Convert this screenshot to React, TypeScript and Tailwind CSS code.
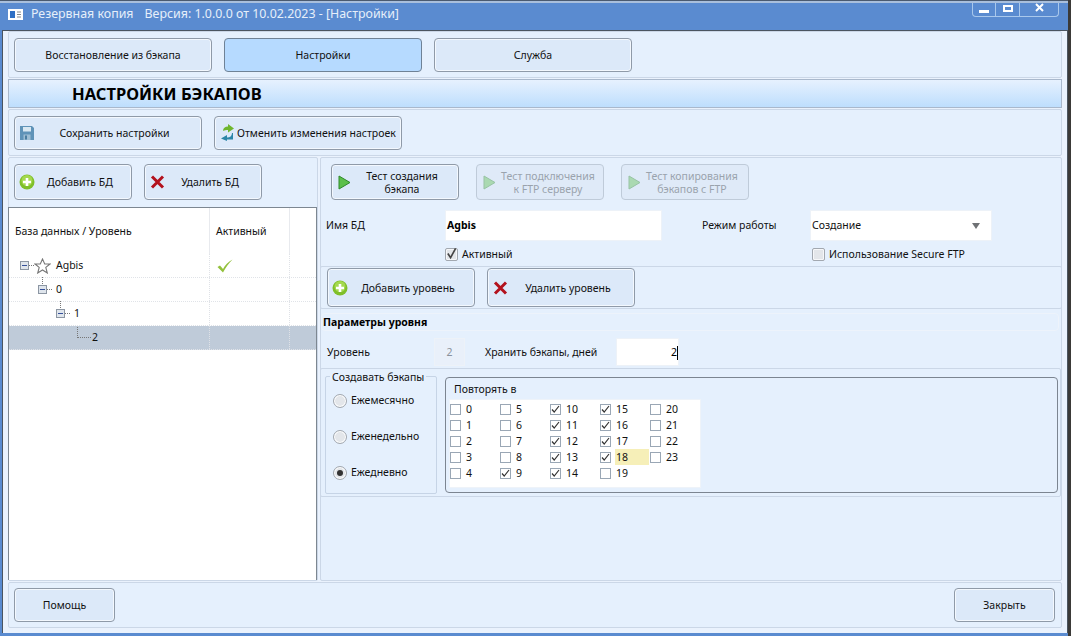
import React from "react";

const font = "font-['Noto_Sans','Open_Sans',sans-serif]";
const panel = "bg-[#e5f0fd] border border-[#cbd7e7] rounded-[2px]";

function PlusIcon() {
  return (
    <svg width="16" height="16" viewBox="0 0 16 16">
      <circle cx="8" cy="8" r="7.5" fill="#7fbf2a" />
      <circle cx="8" cy="6.5" r="5.5" fill="#a4d94f" />
      <path d="M8 4v8M4 8h8" stroke="#fff" strokeWidth="2.6" />
    </svg>
  );
}

function CrossIcon() {
  return (
    <svg width="15" height="14" viewBox="0 0 15 14">
      <path d="M2 1.5l11 11M13 1.5l-11 11" stroke="#b3121d" strokeWidth="3" />
    </svg>
  );
}

function PlayIcon({ faded }: { faded?: boolean }) {
  return (
    <svg width="13" height="15" viewBox="0 0 13 15" className={faded ? "opacity-40" : ""}>
      <path d="M1 1l11 6.5L1 14z" fill="#5cc04a" stroke="#2f8a2a" strokeWidth="1" />
    </svg>
  );
}

function SaveIcon() {
  return (
    <svg width="14" height="14" viewBox="0 0 14 14">
      <path d="M0 0h12l2 2v12H0z" fill="#5f93b8" />
      <rect x="3" y="1" width="8" height="4.5" fill="#d9e8f2" />
      <rect x="3.5" y="8.5" width="7" height="5.5" fill="#9dbdd3" />
      <rect x="5" y="9.5" width="2" height="4" fill="#4a7da0" />
    </svg>
  );
}

function RevertIcon() {
  return (
    <svg width="15" height="17" viewBox="0 0 15 17">
      <path d="M3 7c0-3 2-4.500 5-4.500V0l6 4.500-6 4V6C6 6 4.500 6 3 7z" fill="#6fb62e" />
      <path d="M12 9c0 3-2 4.500-5 4.500V11L1 14.500l6 2.500v-1.500h6V9z" fill="#2c86a8" />
    </svg>
  );
}

function StarIcon() {
  return (
    <svg width="17" height="16" viewBox="0 0 17 16">
      <path d="M8.500 1l2.200 5h5.300l-4.200 3.400 1.500 5.600-4.800-3-4.800 3 1.500-5.600L1 6h5.300z" fill="none" stroke="#777" strokeWidth="1.100" />
    </svg>
  );
}

function TickIcon() {
  return (
    <svg width="16" height="14" viewBox="0 0 16 14">
      <path d="M0.500 8l2.500-1.500 3 3.500C8 6 11 3 15.500 0.500 11.500 4.500 9 8 6 13.500z" fill="#93c13c" />
    </svg>
  );
}

function Expander({ stem }: { stem?: boolean }) {
  return (
    <span className="relative w-[9px] h-[9px] bg-[#dfe5ec] border border-[#8c96a3] flex items-center justify-center shrink-0">
      <span className="w-[5px] h-px bg-[#35509a]" />
      {stem && <span className="absolute -top-[9px] left-[3px] h-[7px] border-l border-dotted border-[#777]" />}
    </span>
  );
}

function Btn({ w, h = "h-[34px]", active, disabled, icon, iconBox = "w-[24px]", children }: {
  w: string;
  h?: string;
  active?: boolean;
  disabled?: boolean;
  icon?: React.ReactNode;
  iconBox?: string;
  children: React.ReactNode;
}) {
  const look = active
    ? "bg-[#b6daff] border-[#6f8296] text-[#111]"
    : disabled
      ? "bg-[#dfeaf8] border-[#bfcbd9] text-[#9aa3ad]"
      : "bg-[#dce9f9] border-[#8f9aa8] text-[#111] shadow-[inset_0_0_0_1px_#f3f8fe]";
  return (
    <div className={`${w} ${h} ${look} border rounded-[4px] flex items-center shrink-0 leading-[13px] whitespace-nowrap`}>
      {icon && <span className={`${iconBox} shrink-0 flex items-center justify-center`}>{icon}</span>}
      <span className="flex-1 text-center pt-px">{children}</span>
    </div>
  );
}

function Check({ on, big }: { on?: boolean; big?: boolean }) {
  if (big) {
    return (
      <span className="w-[13px] h-[13px] bg-[#e3e6ea] border border-[#a2a8b0] rounded-[2px] shadow-[inset_0_0_0_1px_#f6f7f9] shrink-0 flex items-center justify-center">
        {on && (
          <svg width="12" height="13" viewBox="0 0 12 13" className="-mt-[2px]">
            <path d="M2 6.500l3 4.500L10.500 1" fill="none" stroke="#444" strokeWidth="1.800" />
          </svg>
        )}
      </span>
    );
  }
  return (
    <span className="w-[11px] h-[11px] bg-white border border-[#9aa7b5] shrink-0 flex items-center justify-center">
      {on && (
        <svg width="9" height="9" viewBox="0 0 9 9">
          <path d="M1 4.500l2.200 2.500L8 1" fill="none" stroke="#333" strokeWidth="1.200" />
        </svg>
      )}
    </span>
  );
}

function Radio({ on, label }: { on?: boolean; label: string }) {
  return (
    <div className="flex items-center gap-[4px] h-[36px]">
      <span className="w-[14px] h-[14px] rounded-full bg-[#e3e6ea] border border-[#a2a8b0] shadow-[inset_0_0_0_1px_#fff] flex items-center justify-center">
        {on && <span className="w-[6px] h-[6px] rounded-full bg-[#333]" />}
      </span>
      <span>{label}</span>
    </div>
  );
}

const hours = [
  0, 1, 2, 3, 4, 5, 6, 7, 8, 9, 10, 11, 12, 13, 14, 15, 16, 17, 18, 19, 20, 21, 22, 23,
];
const checked = [9, 10, 11, 12, 13, 14, 15, 16, 17, 18];

function TreeRow({ indent, label, expander, stem, selected, link, tick, star }: {
  indent: string;
  label: string;
  expander?: boolean;
  stem?: boolean;
  selected?: boolean;
  link?: boolean;
  tick?: boolean;
  star?: boolean;
}) {
  return (
    <div className={`flex h-6 border-b border-dotted border-[#e0e3e8] ${selected ? "bg-[#bfcbd9]" : ""}`}>
      <div className={`w-[201px] flex items-center ${indent} border-r border-dotted border-[#dfe2e7]`}>
        {expander && <Expander stem={stem} />}
        {link && <span className="w-[14px] h-[11px] -mt-[11px] border-l border-b border-dotted border-[#777] mr-[1px]" />}
        {expander && <span className="w-[5px] border-t border-dotted border-[#777] mr-[4px]" />}
        {star && <span className="mr-[5px] -ml-[4px] flex"><StarIcon /></span>}
        <span>{label}</span>
      </div>
      <div className="w-[80px] border-r border-dotted border-[#dfe2e7] flex items-center pl-[7px]">
        {tick && <TickIcon />}
      </div>
    </div>
  );
}

export default function App() {
  return (
    <div className={`w-[1071px] h-[636px] bg-[#3b3a38] overflow-hidden flex text-[10.5px] text-[#111] ${font}`}>
      <div className="w-[1068px] h-[636px] bg-[#5a8bd0] flex flex-col shrink-0">
        <div className="h-px bg-[#4a5a70] shrink-0" />
        <div className="h-[2px] bg-[#a9bfdc] shrink-0" />

        {/* Title bar */}
        <div className="h-[27px] shrink-0 flex justify-between pl-[8px]">
          <div className="flex items-center gap-[8px] pb-[4px] text-[12.400px] text-[#e6effa]">
            <svg width="15" height="11" viewBox="0 0 15 11">
              <rect width="15" height="11" fill="#fff" />
              <rect x="2" y="2" width="5" height="7" fill="#2f6fc4" />
              <path d="M9 3h4M9 5.500h4M9 8h4" stroke="#888" />
            </svg>
            <span>Резервная копия</span>
            <span className="ml-[3px]">Версия: 1.0.0.0 от 10.02.2023 - [Настройки]</span>
          </div>
          <div className="flex h-[14px] w-[87px] border border-t-0 border-[#a9c8ec] rounded-b-[4px] mr-[9px]">
            <div className="w-[23px] border-r border-[#a9c8ec] flex items-end justify-center pb-[3px]">
              <span className="w-[10px] h-[3px] bg-white" />
            </div>
            <div className="w-[24px] border-r border-[#a9c8ec] flex items-start justify-center pt-[2px]">
              <span className="w-[10px] h-[7px] border-2 border-white" />
            </div>
            <div className="flex-1 flex items-start justify-center">
              <svg width="9" height="9" viewBox="0 0 9 9">
                <path d="M1 1l7 7M8 1l-7 7" stroke="#fff" strokeWidth="2" />
              </svg>
            </div>
          </div>
        </div>

        {/* Client area */}
        <div className="ml-[2px] w-[1066px] h-[603px] border-t border-l border-r border-[#4b5560] bg-[#eaf2fd] pl-[5px] shrink-0">
          <div className="w-[1054px] flex flex-col gap-px">
            {/* Tabs */}
            <div className={`${panel} h-[47px] flex items-center gap-3 pl-[5px]`}>
              <Btn w="w-[198px]">Восстановление из бэкапа</Btn>
              <Btn w="w-[198px]" active>Настройки</Btn>
              <Btn w="w-[198px]">Служба</Btn>
            </div>

            {/* Heading */}
            <div className="h-[29px] pt-px bg-gradient-to-b from-[#e6f1fe] to-[#bedefd] border border-[#a9b8cc] flex items-center pl-[63px] text-[16.500px] font-bold text-black">
              НАСТРОЙКИ БЭКАПОВ
            </div>

            {/* Save bar */}
            <div className={`${panel} h-[47px] flex items-center gap-3 pl-[5px]`}>
              <Btn w="w-[188px]" icon={<SaveIcon />}><span className="pr-[11px] block">Сохранить настройки</span></Btn>
              <Btn w="w-[188px]" icon={<RevertIcon />} iconBox="w-[20px] ml-[2px]"><span className="pr-[10px] block">Отменить изменения настроек</span></Btn>
            </div>

            <div className="flex gap-[2px] h-[424px]">
              {/* Left column */}
              <div className={`${panel} w-[310px] flex flex-col`}>
                <div className="h-[48px] mb-px shrink-0 flex items-center gap-3 pl-[5px]">
                  <Btn w="w-[118px]" h="h-[36px]" icon={<PlusIcon />}><span className="pr-[10px] block">Добавить БД</span></Btn>
                  <Btn w="w-[118px]" h="h-[36px]" icon={<CrossIcon />}><span className="pr-[10px] block">Удалить БД</span></Btn>
                </div>
                <div className="flex-1 bg-white border border-[#7d8791] border-b-0 -ml-px">
                  <div className="h-[46px] flex">
                    <div className="w-[201px] pt-px border-r border-[#e8eaee] flex items-center pl-[6px]">База данных / Уровень</div>
                    <div className="w-[80px] pt-px border-r border-[#e8eaee] flex items-center pl-[6px]">Активный</div>
                  </div>
                  <TreeRow indent="pl-[11px]" label="Agbis" expander star tick />
                  <TreeRow indent="pl-[29px]" label="0" expander stem />
                  <TreeRow indent="pl-[47px]" label="1" expander stem />
                  <TreeRow indent="pl-[68px]" label="2" link selected />
                </div>
              </div>

              {/* Right column */}
              <div className={`${panel} w-[742px] flex flex-col`}>
                <div className="h-[48px] shrink-0 flex items-center gap-[17px] pl-[10px]">
                  <Btn w="w-[128px]" h="h-[36px]" icon={<PlayIcon />}><span className="pr-[10px] block">Тест создания<br />бэкапа</span></Btn>
                  <Btn w="w-[128px]" h="h-[36px]" disabled icon={<PlayIcon faded />}><span className="pr-[10px] block">Тест подключения<br />к FTP серверу</span></Btn>
                  <Btn w="w-[128px]" h="h-[36px]" disabled icon={<PlayIcon faded />}><span className="pr-[12px] block">Тест копирования<br />бэкапов с FTP</span></Btn>
                </div>

                <div className="h-[32px] mt-[3px] shrink-0 flex items-center pl-[5px]">
                  <span className="w-[119px] pt-px">Имя БД</span>
                  <div className="w-[217px] h-[31px] pt-px bg-white border border-[#edf2f8] flex items-center pl-[1px] font-bold text-black">Agbis</div>
                  <span className="w-[148px] pl-[40px] pt-px">Режим работы</span>
                  <div className="w-[182px] h-[31px] pt-px bg-white border border-[#edf2f8] flex items-center justify-between pl-[1px] pr-[11px]">
                    <span>Создание</span>
                    <span className="w-0 h-0 border-x-[4px] border-x-transparent border-t-[6px] border-t-[#6f7275]" />
                  </div>
                </div>

                <div className="h-[25px] shrink-0 flex items-center pt-[2px]">
                  <div className="ml-[124px] w-[367px] flex items-center gap-[4px]"><Check big on />Активный</div>
                  <div className="flex items-center gap-[4px]"><Check big />Использование Secure FTP</div>
                </div>

                <div className={`${panel} h-[43px] shrink-0 flex items-center gap-3 pl-[6px] -mx-px`}>
                  <Btn w="w-[148px]" h="h-[39px]" icon={<PlusIcon />}><span className="pr-[10px] block">Добавить уровень</span></Btn>
                  <Btn w="w-[148px]" h="h-[39px]" icon={<CrossIcon />}><span className="pr-[10px] block">Удалить уровень</span></Btn>
                </div>

                <div className="h-[18px] mt-[4px] pt-px shrink-0 w-[738px] bg-[#e5f0fd] border border-[#edf3fb] rounded-[4px] flex items-center pl-[1px] font-bold text-black">
                  Параметры уровня
                </div>

                <div className="h-[28px] mt-[7px] shrink-0 flex items-center pl-[6px]">
                  <span className="w-[107px] pt-[2px]">Уровень</span>
                  <div className="w-[31px] h-[28px] pt-[2px] bg-[#e9f0fa] border border-[#edf2f8] flex items-center justify-center text-[#8a929c]">2</div>
                  <span className="w-[151px] pl-[20px] pt-[2px]">Хранить бэкапы, дней</span>
                  <div className="w-[63px] h-[28px] pt-[2px] bg-white border border-[#edf2f8] flex items-center justify-end text-black">2<span className="w-px h-[14px] bg-black" /></div>
                </div>

                <div className={`${panel} h-[129px] mt-[2px] shrink-0 w-[741px] -ml-px flex items-end gap-[8px] pl-[4px] pb-[2px]`}>
                  <div className="w-[112px] h-[118px] border border-[#c6d4e6] rounded-[2px] px-[7px] relative">
                    <span className="absolute -top-[7px] left-[4px] bg-[#e5f0fd] px-[2px]">Создавать бэкапы</span>
                    <div className="pt-[6px] flex flex-col">
                      <Radio label="Ежемесячно" />
                      <Radio label="Еженедельно" />
                      <Radio on label="Ежедневно" />
                    </div>
                  </div>
                  <div className="w-[613px] h-[116px] mb-px border border-[#7c8591] rounded-[4px] pl-[3px]">
                    <div className="h-[21px] pt-[3px] flex items-center pl-[5px]">Повторять в</div>
                    <div className="w-[252px] h-[89px] bg-white border border-[#eef3f9] grid grid-rows-[repeat(5,16px)] grid-flow-col auto-cols-[50px] content-start pt-px">
                      {hours.map((h) => (
                        <div key={h} className="h-[16px] flex items-center gap-[4px]">
                          <Check on={checked.includes(h)} />
                          <span className={`flex-1 pl-px mr-px h-[16px] leading-[16px] ${h === 18 ? "bg-[#f6efb8]" : ""}`}>{h}</span>
                        </div>
                      ))}
                    </div>
                  </div>
                </div>
              </div>
            </div>

            {/* Footer */}
            <div className={`${panel} h-[46px] flex items-center justify-between pl-[5px] pr-[6px]`}>
              <Btn w="w-[101px]">Помощь</Btn>
              <Btn w="w-[101px]">Закрыть</Btn>
            </div>
          </div>
        </div>
      </div>
    </div>
  );
}
